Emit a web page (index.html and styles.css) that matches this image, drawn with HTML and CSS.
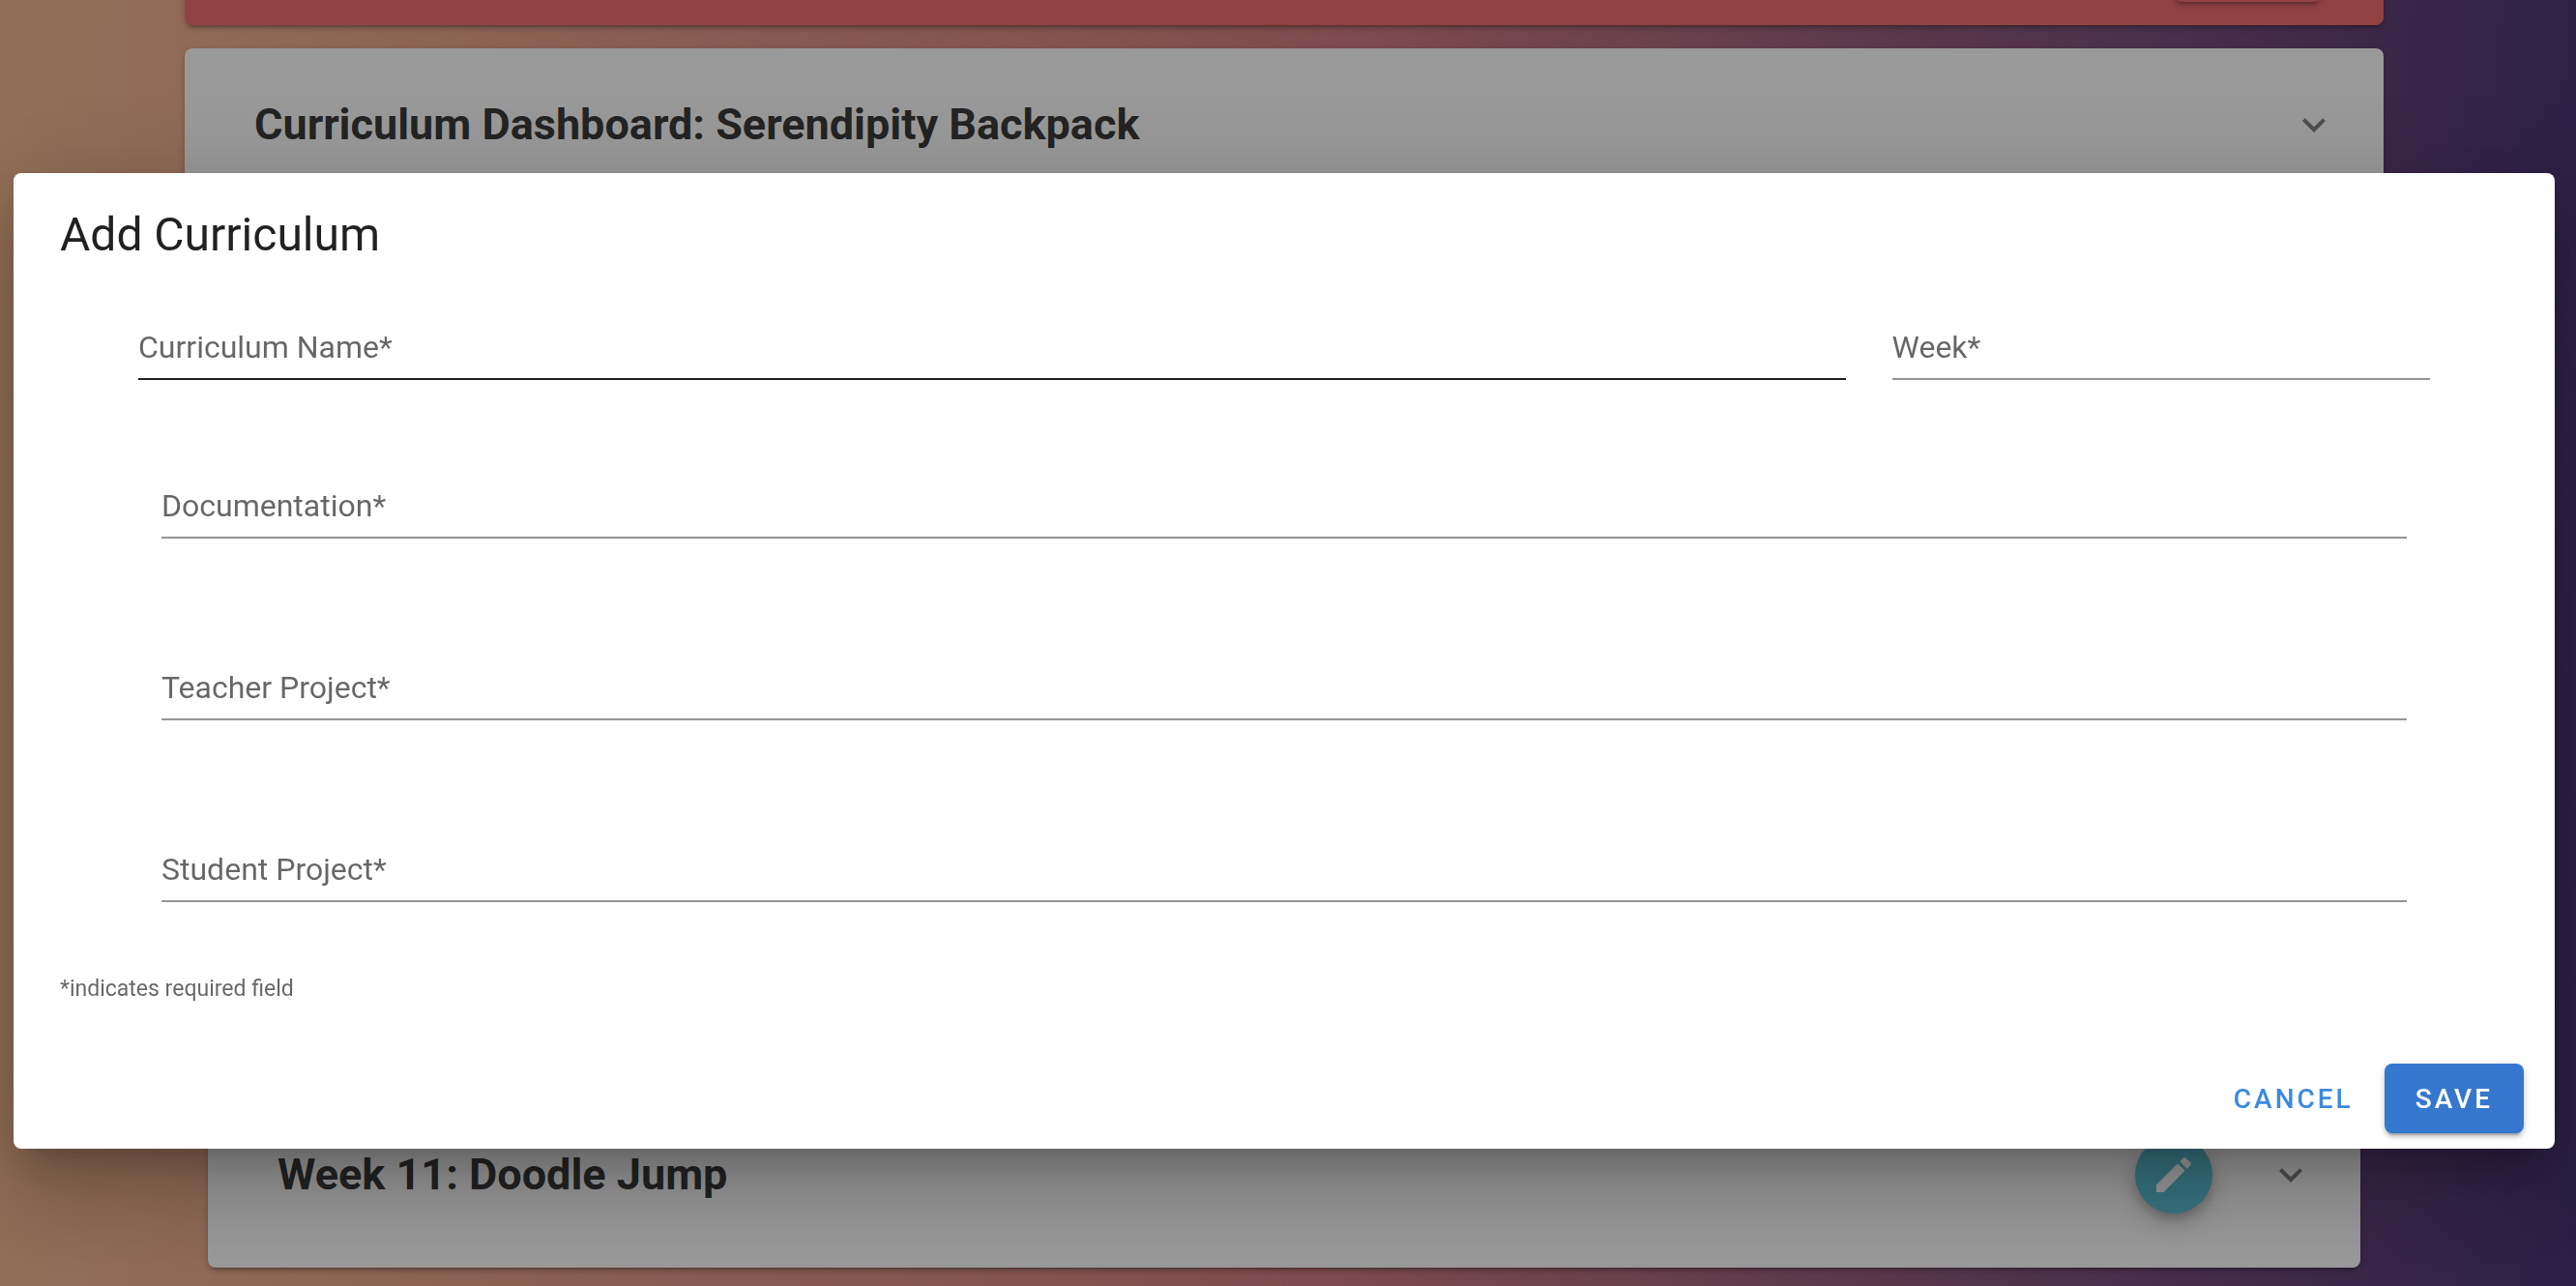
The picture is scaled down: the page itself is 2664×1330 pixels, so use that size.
FILE: index.html
```html
<!DOCTYPE html>
<html lang="en">
<head>
<meta charset="utf-8">
<title>Add Curriculum</title>
<link rel="stylesheet" href="styles.css">
</head>
<body>
<main class="page">
  <div class="page-top">
    <div class="alert"><button class="alert-button" type="button" aria-label="Dismiss"></button></div>
    <section class="panel">
      <h2 class="panel-title">Curriculum Dashboard: Serendipity Backpack</h2>
      <svg class="icon chevron" viewBox="0 0 24 24" aria-hidden="true"><path d="M7.41 8.58 12 13.17l4.59-4.59L18 10l-6 6-6-6z"/></svg>
    </section>
  </div>
  <section class="panel panel-week">
    <h2 class="panel-title">Week 11: Doodle Jump</h2>
    <button class="fab" type="button" aria-label="Edit">
      <svg class="icon" viewBox="0 0 24 24" aria-hidden="true"><path d="M20.71 7.04c.39-.39.39-1.04 0-1.41l-2.34-2.34c-.37-.39-1.02-.39-1.41 0l-1.84 1.83 3.75 3.75M3 17.25V21h3.75L17.81 9.93l-3.75-3.75z"/></svg>
    </button>
    <svg class="icon chevron" viewBox="0 0 24 24" aria-hidden="true"><path d="M7.41 8.58 12 13.17l4.59-4.59L18 10l-6 6-6-6z"/></svg>
  </section>
</main>

<div class="overlay">
  <form class="dialog" role="dialog" aria-labelledby="dialog-title">
    <h1 class="dialog-title" id="dialog-title">Add Curriculum</h1>
    <div class="fields">
      <div class="row">
        <div class="col col-wide">
          <div class="field">
            <label for="name">Curriculum Name*</label>
            <input class="is-hovered" id="name" type="text">
          </div>
        </div>
        <div class="col col-narrow">
          <div class="field">
            <label for="week">Week*</label>
            <input id="week" type="text">
          </div>
        </div>
      </div>
      <div class="stack">
        <div class="field">
          <label for="documentation">Documentation*</label>
          <input id="documentation" type="text">
        </div>
        <div class="field">
          <label for="teacher">Teacher Project*</label>
          <input id="teacher" type="text">
        </div>
        <div class="field">
          <label for="student">Student Project*</label>
          <input id="student" type="text">
        </div>
      </div>
    </div>
    <p class="hint">*indicates required field</p>
    <div class="actions">
      <button class="button button-text" type="button">Cancel</button>
      <button class="button button-primary" type="submit">Save</button>
    </div>
  </form>
</div>
</body>
</html>
```
FILE: styles.css
```css
* {
  box-sizing: border-box;
}

body {
  margin: 0;
  font-family: Roboto, sans-serif;
  color: rgba(0, 0, 0, 0.87);
}

h1,
h2,
p {
  margin: 0;
}

button,
input {
  font: inherit;
  border: 0;
}

/* Page behind the dialog */
.page {
  height: 100vh;
  overflow: hidden;
  display: flex;
  flex-direction: column;
  justify-content: space-between;
  padding: 0 199px 19px 191px;
  background: linear-gradient(92deg, #f4b285 0%, #ce6f75 52%, #341f69 100%);
}

.page-top {
  display: flex;
  flex-direction: column;
  gap: 24px;
  margin-top: -70px;
}

.alert,
.panel {
  border-radius: 8px;
  box-shadow: 0 6px 2px -4px rgba(0, 0, 0, 0.2), 0 4px 4px rgba(0, 0, 0, 0.14), 0 2px 10px rgba(0, 0, 0, 0.12);
}

.alert {
  display: flex;
  justify-content: flex-end;
  padding: 0 65px 24px;
  background: #f05f5e;
}

.alert-button {
  width: 152px;
  height: 72px;
  border-radius: 8px;
  background: transparent;
  box-shadow: 0 6px 2px -4px rgba(0, 0, 0, 0.2), 0 4px 4px rgba(0, 0, 0, 0.14), 0 2px 10px rgba(0, 0, 0, 0.12);
}

.panel {
  display: flex;
  align-items: center;
  min-height: 158px;
  padding: 0 48px 0 72px;
  background: #fff;
}

.panel-week {
  min-height: 192px;
  margin: 0 24px;
}

.panel-title {
  flex: 1;
  font-size: 45px;
  line-height: 64px;
  font-weight: 700;
}

.icon {
  display: block;
  width: 48px;
  height: 48px;
  fill: currentColor;
}

.chevron {
  color: rgba(0, 0, 0, 0.54);
}

.fab {
  display: grid;
  place-items: center;
  width: 80px;
  height: 80px;
  margin-right: 57px;
  padding: 0;
  border-radius: 50%;
  background: #4cbad1;
  color: #fff;
  box-shadow: 0 6px 10px -2px rgba(0, 0, 0, 0.2), 0 12px 20px rgba(0, 0, 0, 0.14), 0 2px 36px rgba(0, 0, 0, 0.12);
}

/* Dialog */
.overlay {
  position: fixed;
  inset: 0;
  display: flex;
  align-items: center;
  padding: 37px 22px 0 14px;
  background: rgba(33, 33, 33, 0.46);
}

.dialog {
  flex: 1;
  border-radius: 8px;
  background: #fff;
  box-shadow: 0 22px 30px -14px rgba(0, 0, 0, 0.2), 0 48px 76px 6px rgba(0, 0, 0, 0.14), 0 18px 92px 16px rgba(0, 0, 0, 0.12);
}

.dialog-title {
  padding: 32px 48px 20px;
  font-size: 48px;
  line-height: 64px;
  font-weight: 400;
}

.fields {
  padding: 34px 105px 0;
}

.row {
  display: flex;
  margin-bottom: 100px;
}

.col {
  padding: 0 24px;
}

.col-wide {
  flex: 0 0 75%;
}

.col-narrow {
  flex: 0 0 25%;
}

.stack {
  display: flex;
  flex-direction: column;
  gap: 124px;
  padding: 0 48px;
}

.field {
  display: grid;
  font-size: 32px;
}

.field label,
.field input {
  grid-area: 1 / 1;
}

.field label {
  z-index: 1;
  justify-self: start;
  line-height: 60px;
  color: rgba(0, 0, 0, 0.6);
  pointer-events: none;
}

.field input {
  width: 100%;
  height: 64px;
  padding: 0;
  border-bottom: 2px solid rgba(0, 0, 0, 0.42);
  border-radius: 0;
  outline: 0;
  background: transparent;
}

.field input.is-hovered {
  border-color: rgba(0, 0, 0, 0.87);
}

.hint {
  padding: 70px 48px 41px;
  font-size: 23px;
  line-height: 40px;
  color: rgba(0, 0, 0, 0.6);
}

.actions {
  display: flex;
  justify-content: flex-end;
  gap: 16px;
  padding: 16px 32px 16px 16px;
}

.button {
  height: 72px;
  padding: 0 32px;
  border-radius: 8px;
  font-size: 28px;
  font-weight: 500;
  letter-spacing: 3px;
  text-transform: uppercase;
}

.button-text {
  padding: 0 16px;
  background: transparent;
  color: #3b8ae0;
}

.button-primary {
  background: #3577cf;
  color: #fff;
  box-shadow: 0 6px 2px -4px rgba(0, 0, 0, 0.2), 0 4px 4px rgba(0, 0, 0, 0.14), 0 2px 10px rgba(0, 0, 0, 0.12);
}
```
